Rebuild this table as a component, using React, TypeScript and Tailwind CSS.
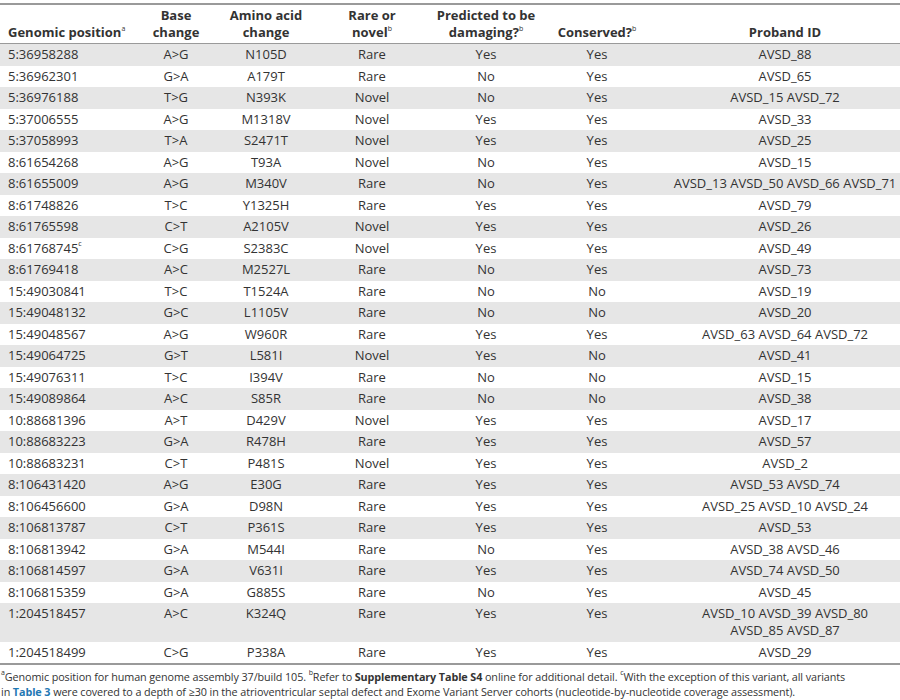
const rows: [string, string, string, string, string, string, string[], string?][] = [
  ["5:36958288", "A>G", "N105D", "Rare", "Yes", "Yes", ["AVSD_88"]],
  ["5:36962301", "G>A", "A179T", "Rare", "No", "Yes", ["AVSD_65"]],
  ["5:36976188", "T>G", "N393K", "Novel", "No", "Yes", ["AVSD_15 AVSD_72"]],
  ["5:37006555", "A>G", "M1318V", "Novel", "Yes", "Yes", ["AVSD_33"]],
  ["5:37058993", "T>A", "S2471T", "Novel", "Yes", "Yes", ["AVSD_25"]],
  ["8:61654268", "A>G", "T93A", "Novel", "No", "Yes", ["AVSD_15"]],
  ["8:61655009", "A>G", "M340V", "Rare", "No", "Yes", ["AVSD_13 AVSD_50 AVSD_66 AVSD_71"]],
  ["8:61748826", "T>C", "Y1325H", "Rare", "Yes", "Yes", ["AVSD_79"]],
  ["8:61765598", "C>T", "A2105V", "Novel", "Yes", "Yes", ["AVSD_26"]],
  ["8:61768745", "C>G", "S2383C", "Novel", "Yes", "Yes", ["AVSD_49"], "c"],
  ["8:61769418", "A>C", "M2527L", "Rare", "No", "Yes", ["AVSD_73"]],
  ["15:49030841", "T>C", "T1524A", "Rare", "No", "No", ["AVSD_19"]],
  ["15:49048132", "G>C", "L1105V", "Rare", "No", "No", ["AVSD_20"]],
  ["15:49048567", "A>G", "W960R", "Rare", "Yes", "Yes", ["AVSD_63 AVSD_64 AVSD_72"]],
  ["15:49064725", "G>T", "L581I", "Novel", "Yes", "No", ["AVSD_41"]],
  ["15:49076311", "T>C", "I394V", "Rare", "No", "No", ["AVSD_15"]],
  ["15:49089864", "A>C", "S85R", "Rare", "No", "No", ["AVSD_38"]],
  ["10:88681396", "A>T", "D429V", "Novel", "Yes", "Yes", ["AVSD_17"]],
  ["10:88683223", "G>A", "R478H", "Rare", "Yes", "Yes", ["AVSD_57"]],
  ["10:88683231", "C>T", "P481S", "Novel", "Yes", "Yes", ["AVSD_2"]],
  ["8:106431420", "A>G", "E30G", "Rare", "Yes", "Yes", ["AVSD_53 AVSD_74"]],
  ["8:106456600", "G>A", "D98N", "Rare", "Yes", "Yes", ["AVSD_25 AVSD_10 AVSD_24"]],
  ["8:106813787", "C>T", "P361S", "Rare", "Yes", "Yes", ["AVSD_53"]],
  ["8:106813942", "G>A", "M544I", "Rare", "No", "Yes", ["AVSD_38 AVSD_46"]],
  ["8:106814597", "G>A", "V631I", "Rare", "Yes", "Yes", ["AVSD_74 AVSD_50"]],
  ["8:106815359", "G>A", "G885S", "Rare", "No", "Yes", ["AVSD_45"]],
  ["1:204518457", "A>C", "K324Q", "Rare", "Yes", "Yes", ["AVSD_10 AVSD_39 AVSD_80", "AVSD_85 AVSD_87"]],
  ["1:204518499", "C>G", "P338A", "Rare", "Yes", "Yes", ["AVSD_29"]],
];

const Sup = ({ t }: { t: string }) => (
  <sup className="relative -top-[1px] text-[7px] font-normal align-super leading-none">{t}</sup>
);

const cols = "grid grid-cols-[130px_92px_88px_124px_104px_118px_1fr]";

export default function App() {
  return (
    <div className="w-[900px] h-[700px] bg-white text-[#333] font-['Open_Sans',sans-serif] overflow-hidden">
      <div className="pt-[3px]">
        <div className="border-t-2 border-b border-[#9a9a9a]">
          <div className={`${cols} items-end text-[13px] leading-[17px] font-bold pt-[2px] pb-[2px] text-center`}>
            <div className="text-left pl-[8px]">
              Genomic position<Sup t="a" />
            </div>
            <div>
              Base
              <br />
              change
            </div>
            <div>
              Amino acid
              <br />
              change
            </div>
            <div>
              Rare or
              <br />
              novel<Sup t="b" />
            </div>
            <div>
              Predicted to be
              <br />
              damaging?<Sup t="b" />
            </div>
            <div>
              Conserved?<Sup t="b" />
            </div>
            <div className="pl-[14px]">Proband ID</div>
          </div>
        </div>
        <div className="border-b-2 border-[#9a9a9a]">
          {rows.map((r, i) => (
            <div
              key={r[0]}
              className={`${cols} text-[13px] leading-[17px] py-[2.25px] text-center ${
                i % 2 === 0 ? "bg-[#e6e6e6]" : "bg-white"
              }`}
            >
              <div className="text-left pl-[8px]">
                {r[0]}
                {r[7] && <Sup t={r[7]} />}
              </div>
              <div>{r[1]}</div>
              <div>{r[2]}</div>
              <div>{r[3]}</div>
              <div>{r[4]}</div>
              <div>{r[5]}</div>
              <div className="pl-[14px]">
                {r[6].map((l) => (
                  <div key={l}>{l}</div>
                ))}
              </div>
            </div>
          ))}
        </div>
        <p className="text-[10.8px] leading-[15px] pt-[4px] pl-[1px] whitespace-nowrap tracking-[-0.1px]">
          <Sup t="a" />
          Genomic position for human genome assembly 37/build 105. <Sup t="b" />
          Refer to <b>Supplementary Table S4</b> online for additional detail. <Sup t="c" />
          With the exception of this variant, all variants
          <br />
          in <b className="text-[#1f78b4]">Table 3</b> were covered to a depth of ≥30 in the atrioventricular septal defect and
          Exome Variant Server cohorts (nucleotide-by-nucleotide coverage assessment).
        </p>
      </div>
    </div>
  );
}
